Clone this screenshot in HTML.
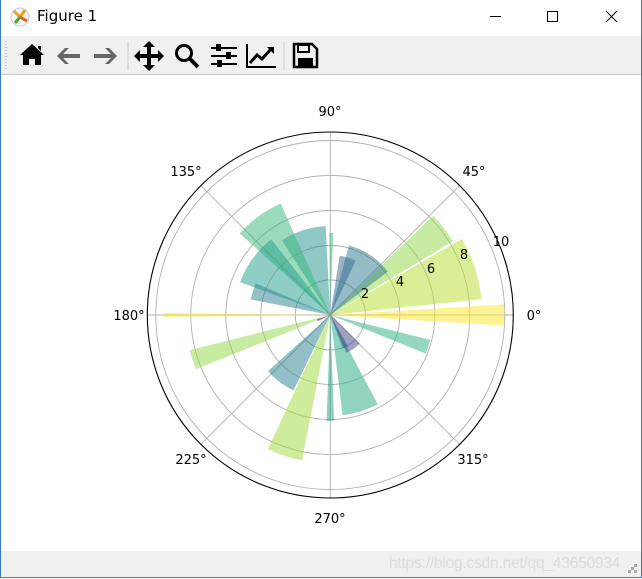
<!DOCTYPE html>
<html><head><meta charset="utf-8"><style>
html,body{margin:0;padding:0;width:642px;height:579px;overflow:hidden;background:#fff;font-family:"Liberation Sans","DejaVu Sans",sans-serif}
#win{position:absolute;left:0;top:0;width:640px;height:577px;border:1px solid #3a7bc8;border-top:none;background:#fff}
#title{position:absolute;left:0;top:0;width:640px;height:36px;background:#fff}
#title .t{position:absolute;left:36px;top:7px;font-size:15px;color:#000;font-family:"DejaVu Sans","Liberation Sans",sans-serif}
#tb{position:absolute;left:0;top:36px;width:640px;height:38px;background:#f0f0f0;border-bottom:1px solid #c8c8c8}
#status{position:absolute;left:0;top:551px;width:640px;height:26px;background:#f0f0f0}
#status .w{position:absolute;left:388px;top:4px;font-size:15.5px;color:#dcdcdc;letter-spacing:-0.2px}
</style></head><body>
<div id="win">
<div id="title">
<svg width="640" height="36" style="position:absolute;left:0;top:0">
<circle cx="19" cy="17" r="9" fill="#f4f4f4" stroke="#ccc"/>
<path d="M13 11 L19 17 L24 10" stroke="#f0a020" stroke-width="3" fill="none"/>
<path d="M19 17 L14 23" stroke="#40b040" stroke-width="3"/>
<path d="M19 17 L26 21" stroke="#e06020" stroke-width="3"/>
<path d="M489 16.5 H500" stroke="#000"/>
<rect x="546.5" y="11.5" width="10" height="10" fill="none" stroke="#000"/>
<path d="M605 11 L616 22 M616 11 L605 22" stroke="#000"/>
</svg>
<span class="t">Figure 1</span>
</div>
<div id="tb">
<svg width="640" height="38" style="position:absolute;left:0;top:0">
<path d="M5 5 V33" stroke="#aaa" stroke-dasharray="1 2"/>
<path d="M31 8 L19 19 H22 V29 H28 V23 H34 V29 H40 V19 H43 Z M37 10 H40 V15 L37 12Z" fill="#000"/>
<path d="M56 20 L64 12 L68 12 L62 18 H79 V22 H62 L68 28 H64 Z" fill="#666"/>
<path d="M116 20 L108 12 L104 12 L110 18 H93 V22 H110 L104 28 H108 Z" fill="#666"/>
<path d="M127 6 V34" stroke="#ccc"/>
<path d="M148 5 L154 11 H150 V18 H157 V14 L163 20 L157 26 V22 H150 V29 H154 L148 35 L142 29 H146 V22 H139 V26 L133 20 L139 14 V18 H146 V11 H142 Z" fill="#000"/>
<circle cx="183" cy="17" r="7.5" fill="none" stroke="#000" stroke-width="3"/>
<path d="M188 22 L197 31" stroke="#000" stroke-width="4"/>
<path d="M210 12 H236 M210 20 H236 M210 28 H236" stroke="#000" stroke-width="2"/>
<rect x="215" y="8" width="5" height="7" fill="#000"/><rect x="225" y="16" width="5" height="7" fill="#000"/><rect x="216" y="24" width="5" height="7" fill="#000"/>
<path d="M246 8 V31 H275" stroke="#000" stroke-width="2" fill="none"/>
<path d="M249 27 L256 19 L261 23 L270 13" stroke="#000" stroke-width="3" fill="none"/>
<path d="M266 11 H273 V18 Z" fill="#000"/>
<path d="M283 6 V34" stroke="#ccc"/>
<path d="M293 8 H311 L316 13 V31 H293 Z" fill="none" stroke="#000" stroke-width="2.5"/>
<rect x="297" y="9" width="11" height="7" fill="none" stroke="#000" stroke-width="2"/>
<rect x="297" y="22" width="15" height="9" fill="#000"/>
</svg>
</div>
<svg width="640" height="476" style="position:absolute;left:0;top:75px">
<g transform="translate(0,-75)">
<g id="g"></g>
<g font-family="DejaVu Sans, Liberation Sans, sans-serif" font-size="13" fill="#000" text-anchor="middle">
<text x="329" y="116">90°</text>
<text x="473" y="176">45°</text>
<text x="185" y="176">135°</text>
<text x="128" y="320">180°</text>
<text x="533" y="320">0°</text>
<text x="190" y="464">225°</text>
<text x="329" y="523">270°</text>
<text x="472" y="464">315°</text>
<text x="364" y="298">2</text>
<text x="399" y="286">4</text>
<text x="430" y="273">6</text>
<text x="463" y="259">8</text>
<text x="500" y="246">10</text>
</g>
</g>
</svg>
<div id="status"><span class="w">https://blog.csdn.net/qq_43650934</span>
<svg width="10" height="10" style="position:absolute;right:3px;bottom:3px"><rect x="6" y="0" width="3" height="3" fill="#aaa"/><rect x="3" y="3" width="3" height="3" fill="#aaa"/><rect x="6" y="6" width="3" height="3" fill="#aaa"/><rect x="0" y="6" width="3" height="3" fill="#aaa"/></svg>
</div>
</div>
<script>
(function(){
var cx=329.3,cy=315,s='';
function P(a,r){a=a*Math.PI/180;return (cx+r*Math.cos(a)).toFixed(1)+','+(cy-r*Math.sin(a)).toFixed(1);}
function W(a1,a2,r,c,o){s+='<path d="M'+cx+','+cy+' L'+P(a1,r)+' A'+r+','+r+' 0 0 0 '+P(a2,r)+' Z" fill="'+c+'" fill-opacity="'+o+'"/>';}
s+='<g stroke="#b0b0b0" stroke-width="0.9" fill="none">';
[35,69.5,104.5,139.5,174.5].forEach(function(r){s+='<circle cx="'+cx+'" cy="'+cy+'" r="'+r+'"/>';});
for(var a=0;a<360;a+=45){s+='<path d="M'+cx+','+cy+' L'+P(a,183)+'"/>';}
s+='</g>';
var bars=[
[-3.5,3.5,174,'#fde725'],[6,30,152,'#b5de2b'],[31,44,143,'#8fd744'],[37,75,72,'#2a788e'],[65,81,60,'#31688e'],
[88,90.6,82,'#35b779'],[93,123,89,'#21918c'],[114,138,122,'#35b779'],[128,160,96,'#1f9e89'],[157,169,81,'#26828e'],
[179.3,180.7,167,'#fde725'],[194,202,145,'#8fd744'],[198,206,14,'#440154'],[222,244,84,'#26828e'],[245,259,148,'#a0da39'],
[268,272,106,'#1fa187'],[277,298,101,'#22a884'],[293,316,41,'#414487'],[290,300,36,'#31688e'],[338,346,103,'#2ab07f']];
bars.forEach(function(b){W(b[0],b[1],b[2],b[3],0.5);});
s+='<circle cx="'+cx+'" cy="'+cy+'" r="183" fill="none" stroke="#000" stroke-width="1.1"/>';
var g=document.getElementById('g');
g.innerHTML=s;
})();
</script>
</body></html>
